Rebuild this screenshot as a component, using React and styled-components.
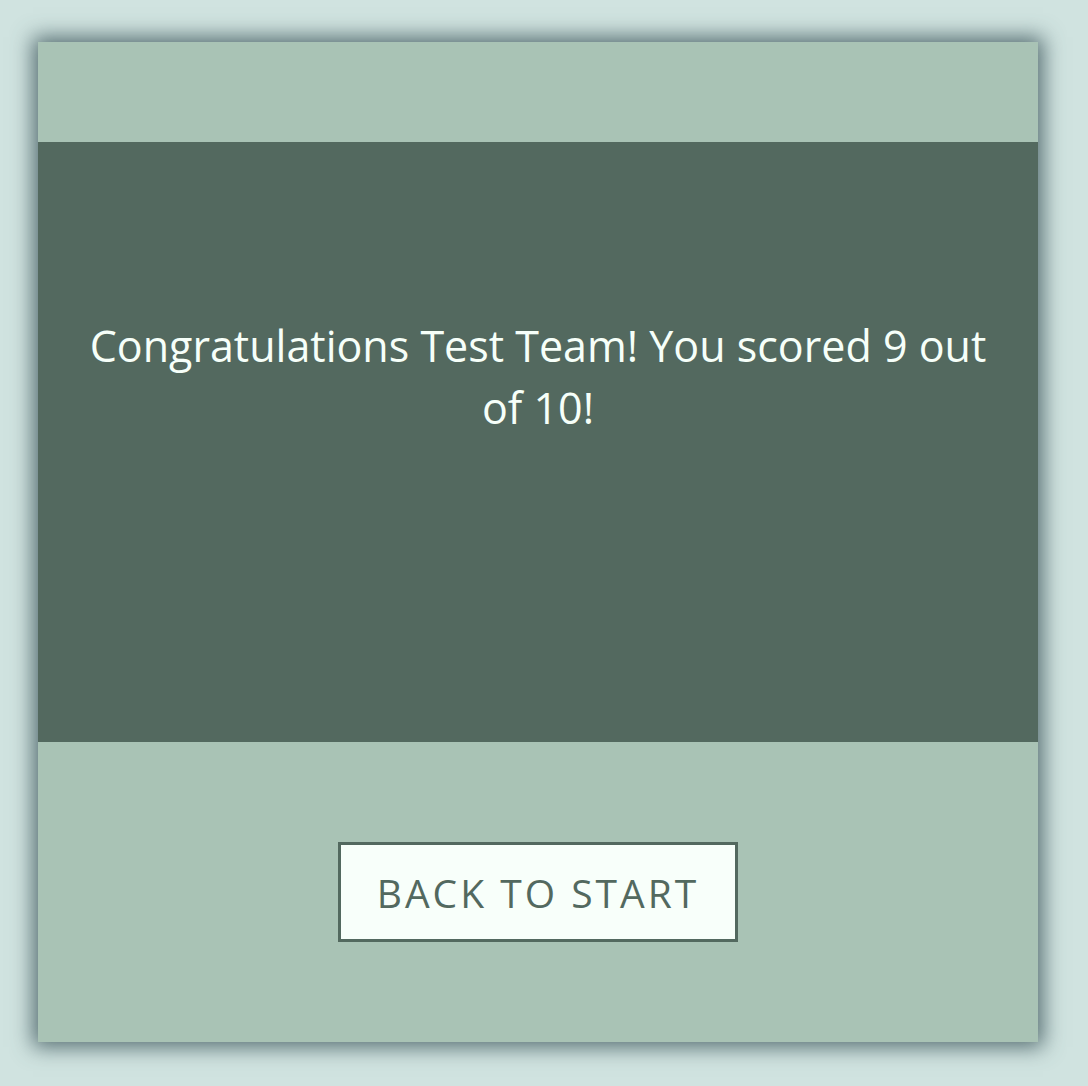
import styled, { createGlobalStyle } from "styled-components";

const GlobalStyle = createGlobalStyle`
  html, body {
    margin: 0;
    padding: 0;
    background: #d0e3e0;
  }
  body {
    font-family: "Open Sans", "Liberation Sans", sans-serif;
  }
`;

const Page = styled.div`
  width: 1088px;
  height: 1086px;
  padding-top: 42px;
  padding-left: 38px;
  box-sizing: border-box;
`;

const Card = styled.div`
  width: 1000px;
  height: 1000px;
  display: flex;
  flex-direction: column;
  background: #a9c3b5;
  box-shadow: 0 0 20px 5px rgba(55, 80, 85, 0.8);
`;

const Header = styled.div`
  height: 100px;
  flex-shrink: 0;
`;

const ResultPanel = styled.div`
  height: 600px;
  flex-shrink: 0;
  background: #53695f;
  box-sizing: border-box;
  padding: 173px 40px 0;
`;

const Message = styled.p`
  margin: 0;
  text-align: center;
  color: #f6fff9;
  font-size: 43px;
  line-height: 62px;
  font-weight: 500;
`;

const Footer = styled.div`
  flex: 1;
  display: flex;
  align-items: center;
  justify-content: center;
`;

const StartButton = styled.button`
  width: 400px;
  height: 100px;
  box-sizing: border-box;
  border: 3px solid #53695f;
  background: #f8fffa;
  color: #53695f;
  font-family: inherit;
  font-size: 39px;
  letter-spacing: 3px;
  text-transform: uppercase;
  cursor: pointer;
`;

const App = () => {
  const team = "Test Team";
  const score = 9;
  const total = 10;

  return (
    <>
      <GlobalStyle />
      <Page>
        <Card>
          <Header />
          <ResultPanel>
            <Message>
              Congratulations {team}! You scored {score} out of {total}!
            </Message>
          </ResultPanel>
          <Footer>
            <StartButton>Back to start</StartButton>
          </Footer>
        </Card>
      </Page>
    </>
  );
};

export default App;
